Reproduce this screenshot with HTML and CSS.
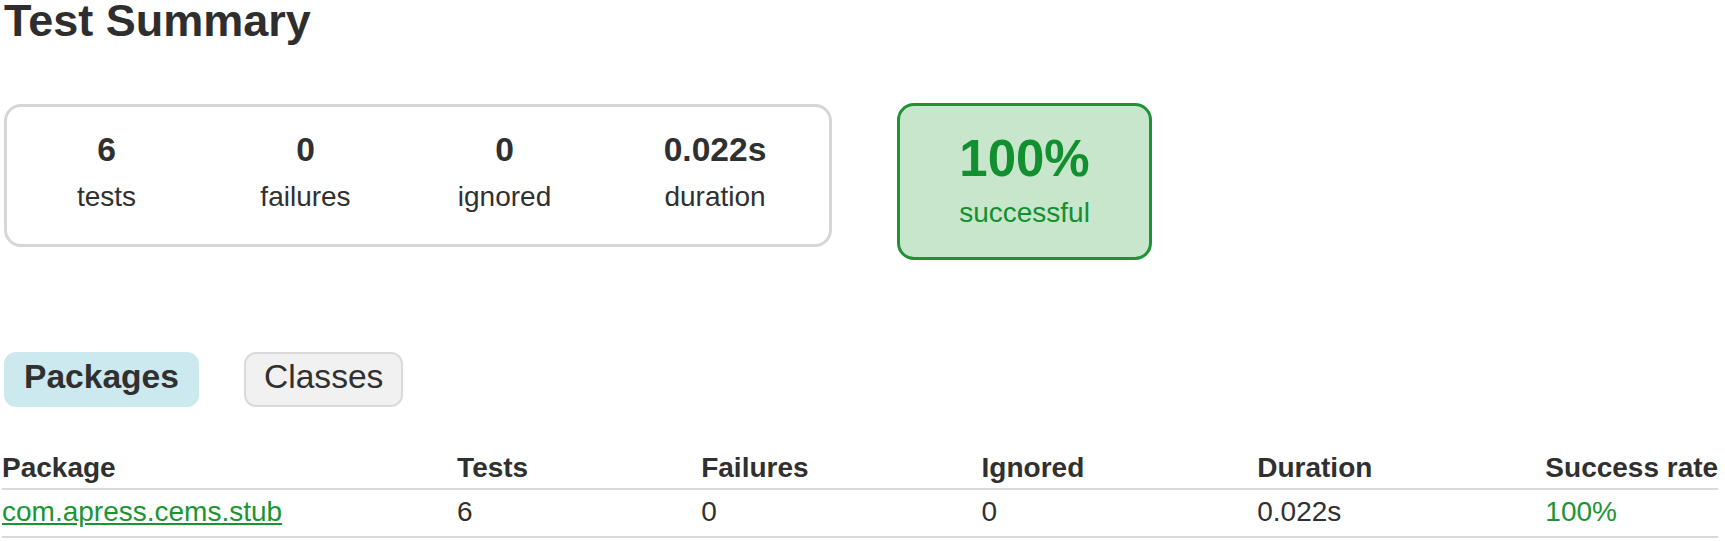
FILE: index.html
```html
<!DOCTYPE html>
<html lang="en">
<head>
<meta charset="utf-8">
<title>Test Summary</title>
<link rel="stylesheet" href="styles.css">
</head>
<body>
<div class="content">
  <h1 class="title">Test Summary</h1>
  <div class="summary">
    <div class="summary-group">
      <div class="info-box">
        <div class="counter">6</div>
        <p class="label">tests</p>
      </div>
      <div class="info-box">
        <div class="counter">0</div>
        <p class="label">failures</p>
      </div>
      <div class="info-box">
        <div class="counter">0</div>
        <p class="label">ignored</p>
      </div>
      <div class="info-box info-box-wide">
        <div class="counter">0.022s</div>
        <p class="label">duration</p>
      </div>
    </div>
    <div class="success-rate">
      <div class="percent">100%</div>
      <p class="label">successful</p>
    </div>
  </div>
  <ul class="tab-links">
    <li class="tab tab-selected"><a class="tab-link" href="#packages">Packages</a></li>
    <li class="tab"><a class="tab-link" href="#classes">Classes</a></li>
  </ul>
  <table class="results">
    <thead>
      <tr>
        <th>Package</th>
        <th>Tests</th>
        <th>Failures</th>
        <th>Ignored</th>
        <th>Duration</th>
        <th>Success rate</th>
      </tr>
    </thead>
    <tbody>
      <tr>
        <td><a class="pkg-link" href="#pkg">com.apress.cems.stub</a></td>
        <td>6</td>
        <td>0</td>
        <td>0</td>
        <td>0.022s</td>
        <td class="success-text">100%</td>
      </tr>
    </tbody>
  </table>
</div>
</body>
</html>
```

FILE: styles.css
```css
* { box-sizing: border-box; }

html, body {
  margin: 0;
  padding: 0;
  background: #ffffff;
}

body {
  font-family: "Liberation Sans", Arial, Helvetica, sans-serif;
  color: #303030;
  width: 1725px;
  height: 541px;
  overflow: hidden;
}

.content {
  padding-left: 2px;
}

.title {
  margin: 0 0 0 2px;
  font-size: 45px;
  line-height: 42px;
  font-weight: bold;
  color: #2e2e2e;
}

.summary {
  display: flex;
  align-items: flex-start;
  margin: 61px 0 0 2px;
}

.summary-group {
  display: flex;
  margin-top: 1px;
  height: 143px;
  padding: 24px 3px 31px 0;
  border: 3px solid #d6d6d6;
  border-radius: 17px;
}

.info-box {
  width: 199px;
  text-align: center;
}

.info-box-wide {
  width: 222px;
}

.counter {
  font-size: 33.6px;
  line-height: 38px;
  font-weight: bold;
  margin-bottom: 12px;
}

.label {
  margin: 0;
  font-size: 28px;
  line-height: 32px;
}

.success-rate {
  margin-left: 65px;
  width: 255px;
  height: 157px;
  padding: 27px 0 28px;
  border: 3px solid #1f9138;
  border-radius: 17px;
  background: #c8e6cc;
  color: #12902f;
  text-align: center;
}

.percent {
  font-size: 51px;
  line-height: 52px;
  font-weight: bold;
  margin-bottom: 12px;
}

.tab-links {
  display: flex;
  gap: 45px;
  list-style: none;
  margin: 92px 0 0 2px;
  padding: 0;
}

.tab {
  padding: 6px 18px 11px;
  border: 2px solid #dadada;
  border-radius: 12px;
  background: #f1f1f1;
  font-size: 33.6px;
  line-height: 34px;
}

.tab-selected {
  background: #cde9f0;
  border-color: #cde9f0;
  font-weight: bold;
}

.tab-link {
  color: #303030;
  text-decoration: none;
}

.results {
  margin-top: 45px;
  border-collapse: collapse;
  font-size: 28px;
  line-height: 32px;
  border-bottom: 2px solid #dadada;
}

.results th {
  text-align: left;
  white-space: nowrap;
  padding: 0 0 4px 173px;
  border-bottom: 2px solid #dadada;
  font-weight: bold;
}

.results td {
  white-space: nowrap;
  padding: 6px 0 8px 173px;
}

.results th:first-child,
.results td:first-child {
  padding-left: 0;
  padding-right: 2px;
}

.pkg-link {
  color: #1b9532;
  text-decoration: underline;
}

.success-text {
  color: #1b9532;
}
```
